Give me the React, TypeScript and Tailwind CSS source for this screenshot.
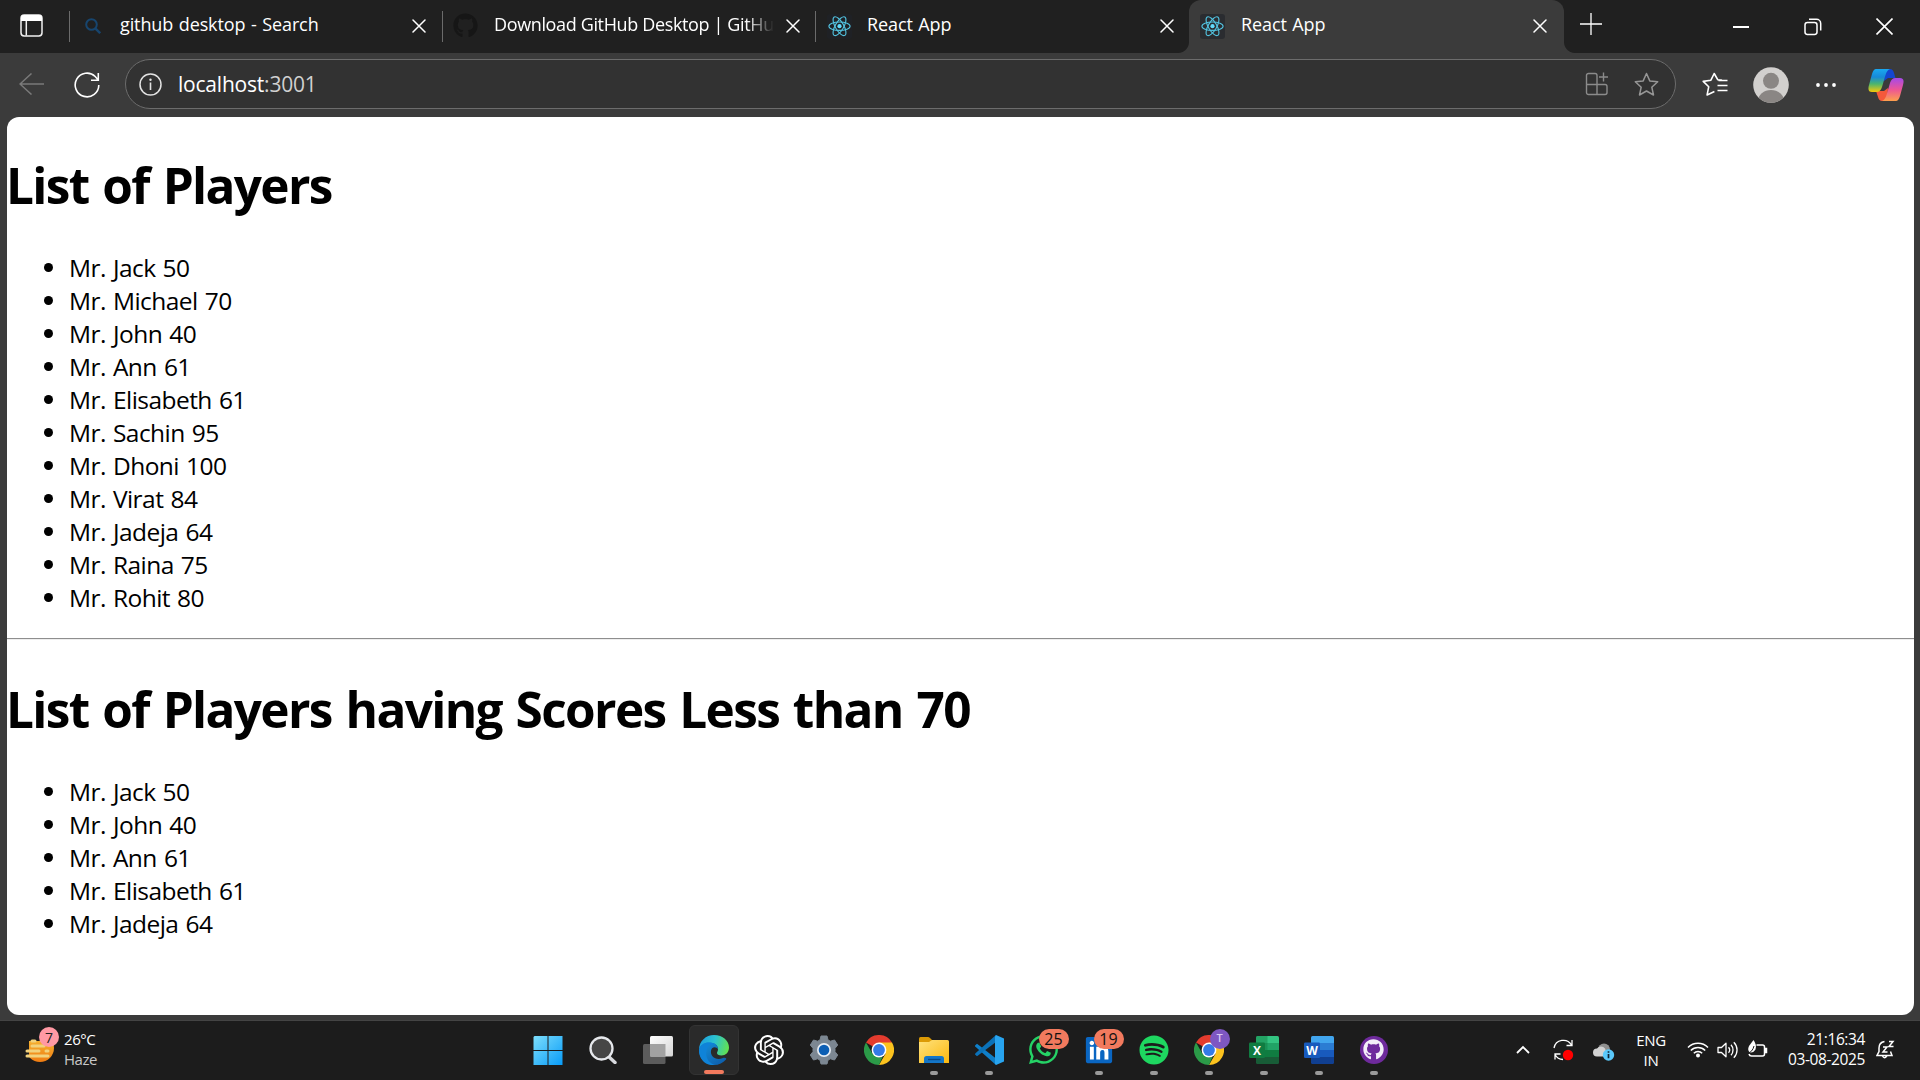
import React from "react";
import { FaGithub, FaWhatsapp, FaLinkedin, FaSpotify } from "react-icons/fa";
import { SiOpenai } from "react-icons/si";

const players = [
  { name: "Jack", score: 50 },
  { name: "Michael", score: 70 },
  { name: "John", score: 40 },
  { name: "Ann", score: 61 },
  { name: "Elisabeth", score: 61 },
  { name: "Sachin", score: 95 },
  { name: "Dhoni", score: 100 },
  { name: "Virat", score: 84 },
  { name: "Jadeja", score: 64 },
  { name: "Raina", score: 75 },
  { name: "Rohit", score: 80 },
];

function ReactLogo() {
  return (
    <svg width="25" height="25" viewBox="0 0 25 25" className="shrink-0 rounded-[3px] bg-[#20232a]/60">
      <g fill="none" stroke="#52c1de" strokeWidth="1.1">
        <ellipse cx="12.5" cy="12.2" rx="10.6" ry="4.2" />
        <ellipse cx="12.5" cy="12.2" rx="10.6" ry="4.2" transform="rotate(60 12.5 12.2)" />
        <ellipse cx="12.5" cy="12.2" rx="10.6" ry="4.2" transform="rotate(120 12.5 12.2)" />
      </g>
      <circle cx="12.5" cy="12.2" r="2.1" fill="#61dafb" />
    </svg>
  );
}

function TabClose() {
  return (
    <svg width="14" height="14" viewBox="0 0 14 14" className="mb-px shrink-0" stroke="#fff" strokeWidth="1.5" strokeLinecap="round">
      <path d="M1 1l12 12M13 1L1 13" />
    </svg>
  );
}

function Divider() {
  return <div className="h-[31px] w-px shrink-0 bg-[#6b6b6b]" />;
}

function TabStrip() {
  return (
    <header className="flex h-[53px] shrink-0 bg-[#202020] text-[18px] tracking-[-0.006em] [word-spacing:1px] text-white">
      <div className="flex w-[69px] items-center pl-5 pb-[2px]">
        <svg width="23" height="23" viewBox="0 0 23 23" fill="none">
          <rect x="1" y="1" width="21" height="21" rx="3.2" stroke="#f0f0f0" strokeWidth="1.5" />
          <path d="M1 7V4a3 3 0 0 1 3-3h15a3 3 0 0 1 3 3v3z" fill="#fff" />
          <path d="M6.3 7v14.5" stroke="#f0f0f0" strokeWidth="1.5" />
        </svg>
      </div>
      <div className="flex w-[373px] items-center">
        <Divider />
        <svg width="16" height="16" viewBox="0 0 16 16" className="mb-[2px] ml-[15px] shrink-0" fill="none" stroke="#17456e" strokeWidth="2">
          <circle cx="6.5" cy="6.5" r="5.3" />
          <path d="M10.3 10.3L15.2 15.2" strokeWidth="2.4" />
        </svg>
        <span className="ml-[19px] w-[292px] whitespace-nowrap pb-[5px]">github desktop - Search</span>
        <TabClose />
      </div>
      <div className="flex w-[373px] items-center">
        <Divider />
        <FaGithub size={25} color="#161616" className="mb-[2px] ml-[10px] shrink-0" />
        <span className="ml-[16px] mr-3 w-[280px] overflow-hidden whitespace-nowrap pb-[5px] tracking-[-0.020em] [mask-image:linear-gradient(90deg,#000_90%,transparent)] [word-spacing:0px]">
          Download GitHub Desktop | GitHub
        </span>
        <TabClose />
      </div>
      <div className="flex w-[374px] items-center bg-[#202020]">
        <Divider />
        <span className="mb-px ml-[11px] flex">
          <ReactLogo />
        </span>
        <span className="ml-[15px] w-[293px] pb-[5px]">React App</span>
        <TabClose />
      </div>
      <div className="relative flex w-[375px] bg-[#202020]">
        <span className="absolute bottom-0 right-full size-[11px] bg-[radial-gradient(circle_at_0_0,#202020_10.5px,#3b3b3b_11.5px)]" />
        <div className="flex w-full items-center rounded-t-[12px] bg-[#3b3b3b] pl-[11px]">
          <span className="mb-px flex">
            <ReactLogo />
          </span>
          <span className="ml-4 w-[292px] pb-[5px]">React App</span>
          <TabClose />
        </div>
      </div>
      <div className="relative flex flex-1 items-center bg-[#202020]">
        <span className="absolute bottom-0 left-0 size-[11px] bg-[radial-gradient(circle_at_100%_0,#202020_10.5px,#3b3b3b_11.5px)]" />
        <svg width="22" height="22" viewBox="0 0 22 22" className="mb-[5px] ml-4" stroke="#fff" strokeWidth="1.3">
          <path d="M11 0v22M0 11h22" />
        </svg>
        <svg width="16" height="16" viewBox="0 0 16 16" className="ml-[131px]" stroke="#fff" strokeWidth="2">
          <path d="M0 8h16" />
        </svg>
        <svg width="18" height="18" viewBox="0 0 18 18" className="ml-[55px]" fill="none" stroke="#fff" strokeWidth="1.5">
          <rect x="1" y="4.5" width="12" height="12" rx="2.4" />
          <path d="M5 1.3h7.5A4.2 4.2 0 0 1 16.7 5.5v7" />
        </svg>
        <svg width="17" height="17" viewBox="0 0 17 17" className="ml-[54px]" stroke="#fff" strokeWidth="1.6">
          <path d="M.5.5l16 16M16.5.5l-16 16" />
        </svg>
      </div>
    </header>
  );
}

const star = "M12.5 1.5l3.3 7.4 7.9.9-5.9 5.4 1.7 7.8-7-4-7 4 1.7-7.8L1.3 9.8l7.9-.9z";

function Toolbar() {
  return (
    <div className="flex h-[64px] shrink-0 items-start pt-[6px]">
      <div className="flex h-[50px] w-[125px] items-center pl-[19px]">
        <svg width="25" height="22" viewBox="0 0 25 22" className="mb-[1px]" fill="none" stroke="#7a7a7a" strokeWidth="1.5">
          <path d="M25 11H1M12.5.5L1 11l11.5 10.5" />
        </svg>
        <svg width="26" height="26" viewBox="0 0 26 26" className="ml-[30px] mt-[1px]" fill="none" stroke="#fff" strokeWidth="1.6">
          <path d="M24.8 13A11.8 11.8 0 1 1 21.2 4.5L23.8 7.5M24.3 1v7.200H17" />
        </svg>
      </div>
      <div className="flex h-[50px] w-[1551px] items-center rounded-full border border-[#6c6c6c] bg-[#323232] pl-[13px]">
        <svg width="23" height="23" viewBox="0 0 23 23" fill="none" stroke="#e2e2e2" strokeWidth="1.5">
          <circle cx="11.5" cy="11.5" r="10.5" />
          <path d="M11.5 9.5v7.5" strokeWidth="1.6" />
          <circle cx="11.5" cy="6.8" r="1.2" fill="#e2e2e2" stroke="none" />
        </svg>
        <span className="ml-[16px] flex-1 pt-px text-[21px] tracking-[-0.010em] text-white">
          localhost<span className="text-[#d0d0d0]">:3001</span>
        </span>
        <svg width="24" height="24" viewBox="0 0 24 24" fill="none" stroke="#8b8b8b" strokeWidth="1.4">
          <path d="M1.5 3.500a2 2 0 0 1 2-2H10a2 2 0 0 1 2 2v9h8a2 2 0 0 1 2 2V20.500a2 2 0 0 1-2 2H3.500a2 2 0 0 1-2-2zM1.500 12.500H12M12 12v10.500M18.500.5v9M14 5h9" />
        </svg>
        <svg width="25" height="25" viewBox="0 0 25 25" className="ml-[25px] mr-[16px]" fill="none" stroke="#969696" strokeWidth="1.5" strokeLinejoin="round">
          <path d={star} />
        </svg>
      </div>
      <div className="flex h-[50px] items-center">
        <svg width="26" height="25" viewBox="0 0 26 25" className="ml-[26px] mt-px" fill="none" stroke="#fff" strokeWidth="1.6" strokeLinejoin="round">
          <path d="M20 8.300l-4.300-.6-3.500-6.200-3.300 6.700-7.700 1.200 5.500 5.400-1.600 8.100 7.300-3.400" />
          <path d="M16.500 8.500h9M15.500 13.500h10M15.500 18.500h10" />
        </svg>
        <svg width="36" height="36" viewBox="0 0 36 36" className="ml-[25px] mt-px">
          <clipPath id="avatar">
            <circle cx="18" cy="18" r="17.8" />
          </clipPath>
          <g clipPath="url(#avatar)">
            <rect width="36" height="36" fill="#d2d0ce" />
            <circle cx="18" cy="13.8" r="8" fill="#8a8684" />
            <ellipse cx="18" cy="34" rx="13" ry="11" fill="#8a8684" />
          </g>
        </svg>
        <svg width="22" height="6" viewBox="0 0 22 6" className="ml-[26px] mt-px" fill="#fff">
          <circle cx="3" cy="3" r="1.9" />
          <circle cx="11" cy="3" r="1.9" />
          <circle cx="19" cy="3" r="1.9" />
        </svg>
        <svg width="36" height="34" viewBox="0 0 36 34" className="ml-[31px] mt-px">
          <defs>
            <linearGradient id="cpA" x1="0" y1="0" x2="0" y2="1">
              <stop offset="0" stopColor="#1aa8f0" />
              <stop offset=".35" stopColor="#1789d8" />
              <stop offset=".65" stopColor="#4cb56d" />
              <stop offset="1" stopColor="#f6c90a" />
            </linearGradient>
            <linearGradient id="cpB" x1="0" y1="0" x2="0" y2="1">
              <stop offset="0" stopColor="#a549ea" />
              <stop offset=".5" stopColor="#ec5596" />
              <stop offset="1" stopColor="#fda04c" />
            </linearGradient>
          </defs>
          <path d="M17 1h5q3 0 4 4l1.500 5H20l-4 3z" fill="#1446cf" />
          <path d="M19 33h-5q-3 0-4-4l-2-6h8l4-3z" fill="#f4593b" />
          <path d="M8 1h14q-3 1-4.500 6l-3.500 12q-1.500 5-5.500 5H4q-5 0-3-7L4 6Q5.500 1 8 1z" fill="url(#cpA)" />
          <path d="M28 33H14q3-1 4.500-6L22 15q1.500-5 5.500-5H32q5 0 3 7l-3 11q-1.500 5-4 5z" fill="url(#cpB)" />
        </svg>
      </div>
    </div>
  );
}

function PlayerList({ items }: { items: typeof players }) {
  return (
    <ul className="text-[24.5px] leading-[33px] tracking-[-0.022em] [word-spacing:1.2px]">
      {items.map((p) => (
        <li key={p.name} className="flex h-[33px] items-center pl-[37px]">
          <span className="mr-[16px] size-[9px] rounded-full bg-black" />
          Mr. {p.name} {p.score}
        </li>
      ))}
    </ul>
  );
}

function Heading({ children }: { children: React.ReactNode }) {
  return (
    <h1 className="-ml-px mb-[32px] mt-[35px] whitespace-nowrap text-[49.5px] font-bold leading-[67px] tracking-[-0.033em] [word-spacing:2.5px]">
      {children}
    </h1>
  );
}

function ChromeIcon() {
  return (
    <svg width="30" height="30" viewBox="0 0 30 30">
      <path d="M15 15L2 7.500A15 15 0 0 1 28 7.500z" fill="#e33b2e" />
      <path d="M15 7.500h13A15 15 0 0 1 15 30l6.500-11.250z" fill="#fcc31e" />
      <path d="M2 7.500l6.500 11.250L15 22.500l3.500-.5L15 30A15 15 0 0 1 2 7.500z" fill="#2b9a48" />
      <circle cx="15" cy="15" r="7.4" fill="#fff" />
      <circle cx="15" cy="15" r="5.9" fill="#357be8" />
    </svg>
  );
}

function OfficeIcon({ letter, bands, tile }: { letter: string; bands: string[]; tile: string }) {
  return (
    <svg width="30" height="28" viewBox="0 0 30 28">
      <clipPath id={"sheet" + letter}>
        <rect x="7" y="0" width="23" height="28" rx="1.5" />
      </clipPath>
      <g clipPath={`url(#sheet${letter})`}>
        {bands.map((c, i) => (
          <rect key={c} x="7" y={i * 7} width="23" height="7" fill={c} />
        ))}
        {letter === "X" && <path d="M7 0h11.500v21H7z" fill="#107c41" opacity=".45" />}
      </g>
      <rect x="0" y="6.5" width="16" height="15.5" rx="1.3" fill={tile} />
      <text x="8" y="18.600" textAnchor="middle" fontSize="12" fontWeight="700" fill="#fff">
        {letter}
      </text>
    </svg>
  );
}

function Cell({ children, running, active }: { children: React.ReactNode; running?: boolean; active?: boolean }) {
  return (
    <div className="flex h-[57px] w-[55px] items-center justify-center">
      <div
        className={
          active
            ? "relative flex h-[50px] w-[50px] items-center justify-center rounded-md border border-[#333] bg-[#2a2a2a]"
            : "relative flex h-[50px] w-[50px] items-center justify-center"
        }
      >
        {children}
        {active && <span className="absolute bottom-0 h-1 w-5 rounded-full bg-[#f27a5e]" />}
        {running && <span className="absolute bottom-0 h-1 w-2 rounded-full bg-[#9a9a9a]" />}
      </div>
    </div>
  );
}

function CountBadge({ children }: { children: React.ReactNode }) {
  return (
    <span className="absolute top-[4px] left-[20px] flex h-5 w-[30px] items-center justify-center rounded-full bg-[#f27a5e] text-[16px] text-[#111]">
      {children}
    </span>
  );
}

function Taskbar() {
  return (
    <footer className="flex h-[60px] shrink-0 border-t border-[#444] bg-[#1c1c1c]">
      <div className="flex w-[520px] pl-[24px]">
        <div className="relative mt-[6px] h-[46px] w-[36px]">
          <svg width="32" height="46" viewBox="0 0 32 46">
            <defs>
              <linearGradient id="sun" x1="0" y1="0" x2="0" y2="1">
                <stop offset="0" stopColor="#f7c23a" />
                <stop offset="1" stopColor="#ef7c12" />
              </linearGradient>
            </defs>
            <circle cx="16" cy="21" r="14" fill="url(#sun)" />
            <path d="M0 6h30v8H5v14H0z" fill="#1c1c1c" />
            <g stroke="#f2d27c" strokeWidth="3" strokeLinecap="round">
              <path d="M8 14h3M8 19h12M3 24h12M22 24h2M3 29h21" />
            </g>
          </svg>
          <span className="absolute left-[15px] top-0 flex size-5 items-center justify-center rounded-full bg-[#ff99a4] text-[14px] text-[#222]">7</span>
        </div>
        <div className="ml-[4px] mt-[8px] text-[15px] leading-5 tracking-[-0.030em] text-white">
          <div>26°C</div>
          <div className="text-[#c8c8c8]">Haze</div>
        </div>
      </div>
      <nav className="flex w-[1001px] pl-px">
        <Cell>
          <svg width="30" height="30" viewBox="0 0 30 30" className="mr-[2px]">
            <defs>
              <linearGradient id="win" x1="0" y1="0" x2="30" y2="30" gradientUnits="userSpaceOnUse">
                <stop offset="0" stopColor="#80e0fc" />
                <stop offset="1" stopColor="#079bf8" />
              </linearGradient>
            </defs>
            <path d="M1.500 1H14.500v14H.5V2zM15.500 1h14v14h-14zM.5 16h14v14H.5zM15.500 16h14v14h-14z" fill="url(#win)" />
          </svg>
        </Cell>
        <Cell>
          <svg width="28" height="28" viewBox="0 0 28 28" className="mr-px">
            <path d="M19 20l7 6.500" stroke="#d8dade" strokeWidth="3.4" strokeLinecap="round" />
            <circle cx="12.5" cy="12.5" r="11" fill="#464646" stroke="#e6e8ec" strokeWidth="2.3" />
          </svg>
        </Cell>
        <Cell>
          <svg width="30" height="28" viewBox="0 0 30 28" className="mr-[2px]">
            <defs>
              <linearGradient id="tv" x1="0" y1="0" x2="1" y2="1">
                <stop offset="0" stopColor="#fff" />
                <stop offset="1" stopColor="#d5d5d5" />
              </linearGradient>
            </defs>
            <rect x="0" y="8" width="22.5" height="20" rx="1.5" fill="#5c5c5c" />
            <rect x="7" y="0" width="23" height="20.5" rx="1.5" fill="url(#tv)" />
            <path d="M7 8h15.500v12.500H7z" fill="#a2a2a2" />
          </svg>
        </Cell>
        <Cell active>
          <svg width="30" height="30" viewBox="0 0 30 30">
            <defs>
              <linearGradient id="edA" x1="0" y1=".3" x2="1" y2=".5">
                <stop offset="0" stopColor="#1c9de0" />
                <stop offset=".5" stopColor="#2cc3cf" />
                <stop offset="1" stopColor="#62e052" />
              </linearGradient>
              <linearGradient id="edB" x1="0" y1="0" x2="1" y2="1">
                <stop offset="0" stopColor="#1593dc" />
                <stop offset="1" stopColor="#0c59a8" />
              </linearGradient>
            </defs>
            <path d="M0 15C0 6 7 0 15 0c9 0 15 6 15 12.500 0 5-3.500 8-7.500 8-3 0-4.500-1-4.500-2.500 0-1 1-1.500 1-4 0-4-4-6-8-6C5 8 1 11 0 15z" fill="url(#edA)" />
            <path d="M0 15c1-5 5-7.500 10-7.500 5 0 9 2.500 9 6.500-1-2-6-3.500-7 1.500-1 6 5 10.500 12 7.500 2-.8 4 .2 3 1.500C24 28 20 30 15 30 6 30 0 23 0 15z" fill="url(#edB)" />
            <path d="M9 12c-4 7-1 16 7 18-10 1-16-6-16-15 1-5 5-7.500 10-7.500 3.500 0 6.500 1 8 3-3-1.500-7-1.500-9 1.500z" fill="#0f83d8" />
          </svg>
        </Cell>
        <Cell>
          <SiOpenai size={30} color="#fff" />
        </Cell>
        <Cell>
          <svg width="30" height="30" viewBox="0 0 30 30">
            <path
              d="M12 1h6l1 4 2.500 1.200L25.500 5l3.200 5-2.700 3.300v3.400l2.700 3.300-3.200 5-4-1.200L19 25l-1 4h-6l-1-4-2.500-1.200-4 1.200-3.200-5L4 16.700v-3.400L1.300 10l3.200-5 4 1.200L11 5z"
              fill="#7c8792"
              stroke="#7c8792"
              strokeLinejoin="round"
            />
            <circle cx="15" cy="15" r="7" fill="#e8eef4" />
            <circle cx="15" cy="15" r="5.3" fill="#0c5fb4" />
          </svg>
        </Cell>
        <Cell>
          <ChromeIcon />
        </Cell>
        <Cell running>
          <svg width="30" height="28" viewBox="0 0 30 28">
            <defs>
              <linearGradient id="folder" x1="0" y1="0" x2="1" y2="1">
                <stop offset="0" stopColor="#ffe27d" />
                <stop offset="1" stopColor="#fbb80f" />
              </linearGradient>
            </defs>
            <path d="M0 2.500Q0 1 1.500 1H9q1 0 2 1l2.500 2.500V9H0z" fill="#dc9a05" />
            <path d="M0 6h10l3-2h15.500Q30 4 30 5.500V27H0z" fill="url(#folder)" />
            <path d="M5 27v-4.500Q5 20 7.500 20h15q2.500 0 2.500 2.500V27z" fill="#1476c8" />
            <path d="M9 23.500h12.500" stroke="#0a4a86" strokeWidth="1.4" />
          </svg>
        </Cell>
        <Cell running>
          <svg width="30" height="30" viewBox="0 0 30 30">
            <path d="M1 10.500l2-1.700 21 16.200-2 5L1.200 11.500z" fill="#0f7fc9" />
            <path d="M1 19.500l2 1.800L24 5.500 22 0 1.200 18.500z" fill="#0b72b9" />
            <path d="M22 0l8 3.500v23L22 30l-1-1.500v-27z" fill="#28a4ef" />
          </svg>
        </Cell>
        <Cell>
          <FaWhatsapp size={33} color="#25d366" />
          <CountBadge>25</CountBadge>
        </Cell>
        <Cell running>
          <FaLinkedin size={30} color="#0a66c2" className="rounded bg-[linear-gradient(#fff,#fff)] bg-[length:22px_20px] bg-center bg-no-repeat" />
          <CountBadge>19</CountBadge>
        </Cell>
        <Cell running>
          <FaSpotify size={30} color="#1ed760" />
        </Cell>
        <Cell running>
          <ChromeIcon />
          <span className="absolute top-[4px] left-[26px] flex size-5 items-center justify-center rounded-full bg-[#7e57c2] text-[11px] font-semibold text-[#d9c9f2]">
            T
          </span>
        </Cell>
        <Cell running>
          <OfficeIcon letter="X" bands={["#33c481", "#21a366", "#107c41", "#185c37"]} tile="#107c41" />
        </Cell>
        <Cell running>
          <OfficeIcon letter="W" bands={["#41a5ee", "#2b7cd3", "#185abd", "#103f91"]} tile="#185abd" />
        </Cell>
        <Cell running>
          <span className="flex size-7 items-center justify-center rounded-full bg-[#6e2a9c]">
            <FaGithub size={21} color="#f3eef8" />
          </span>
        </Cell>
      </nav>
      <div className="flex flex-1 items-start text-white">
        <svg width="14" height="9" viewBox="0 0 14 9" className="-ml-[5px] mt-[24px]" fill="none" stroke="#fff" strokeWidth="1.8">
          <path d="M1 8l6-6 6 6" />
        </svg>
        <svg width="21" height="22" viewBox="0 0 21 22" className="ml-[23px] mt-[18px]" fill="none" stroke="#fff" strokeWidth="1.3">
          <path d="M1 9A9.500 9.500 0 0 1 18.500 6M19 1v5.500h-5.500M2 20.500V15h5.500M2 15.500a9.500 9.500 0 0 0 8 5" />
          <circle cx="15" cy="16" r="5.2" fill="#f00" stroke="none" />
        </svg>
        <svg width="22" height="18" viewBox="0 0 22 18" className="ml-[19px] mt-[22px]">
          <circle cx="11" cy="6.5" r="6" fill="#8f8f8f" />
          <path d="M4 13.500a4 4 0 0 1 0-8 5 5 0 0 1 8 0l3 8z" fill="#d2d2d2" />
          <circle cx="15.5" cy="12" r="5.700" fill="#5ac8fa" />
          <path d="M15.500 11v4.300M15.500 8.300v1.500" stroke="#123" strokeWidth="1.7" />
        </svg>
        <div className="ml-[16px] mt-[9px] w-[40px] text-center text-[15px] leading-5 tracking-[-0.020em]">
          <div>ENG</div>
          <div>IN</div>
        </div>
        <svg width="22" height="17" viewBox="0 0 22 17" className="ml-[16px] mt-[20px]" fill="none" stroke="#fff" strokeWidth="1.5">
          <path d="M1 6.500a14 14 0 0 1 20 0M3.800 9.500a10 10 0 0 1 14.400 0M6.800 12.300a6 6 0 0 1 8.400 0" />
          <circle cx="11" cy="14.5" r="2" fill="#fff" stroke="none" />
        </svg>
        <svg width="21" height="18" viewBox="0 0 21 18" className="ml-[8px] mt-[20px]" fill="none" stroke="#fff" strokeWidth="1.3" strokeLinejoin="round">
          <path d="M1 6.500h3.500L9 2.200v13.600L4.500 11.500H1zM11.500 6.300a4 4 0 0 1 0 5.400M14 3.700a8 8 0 0 1 0 10.600M16.800 1.200a11 11 0 0 1 0 15.600" />
        </svg>
        <svg width="21" height="18" viewBox="0 0 21 18" className="ml-[9px] mt-[19px]" fill="none" stroke="#fff" strokeWidth="1.5">
          <path d="M9.500 5h6q2 0 2 2v7q0 2-2 2h-11q-2 0-2.500-2" />
          <path d="M18 8.500h1.500v4H18z" fill="#fff" />
          <path d="M6.500 0Q10 5 8.500 9.500 6.500 13 3 12.500 0 10 2 6z" fill="#fff" stroke="none" />
          <path d="M7 6q-1.500 6-6.500 7.500" stroke="#1c1c1c" strokeWidth="1" />
        </svg>
        <div className="ml-[9px] mt-[8px] w-[88px] whitespace-nowrap text-right text-[15.5px] leading-5 tracking-[-0.025em]">
          <div>21:16:34</div>
          <div>03-08-2025</div>
        </div>
        <svg width="19" height="20" viewBox="0 0 19 20" className="ml-[11px] mt-[19px]" fill="none" stroke="#fff" strokeWidth="1.5">
          <path d="M8.500 1.500Q3 2.500 3 8v3.500L1 15.500h15l-1.500-4M6.500 16q1.800 3.500 4.300 0" />
          <path d="M7 7h4l-4 5h4.500M13 1.500h4L13 6.500h4.500" />
        </svg>
      </div>
    </footer>
  );
}

export default function App() {
  return (
    <div className="flex h-[1080px] w-[1920px] flex-col overflow-hidden bg-[#3b3b3b] font-['Open_Sans','Noto_Sans',sans-serif]">
      <TabStrip />
      <Toolbar />
      <main className="mb-[5px] ml-[7px] mr-[6px] flex flex-1 flex-col overflow-hidden rounded-[12px] bg-white text-black">
        <Heading>List of Players</Heading>
        <PlayerList items={players} />
        <hr className="mb-px mt-6 h-[2px] border-b border-t-[#8e8e8e] border-b-[#eeeeee]" />
        <Heading>List of Players having Scores Less than 70</Heading>
        <PlayerList items={players.filter((p) => p.score < 70)} />
      </main>
      <Taskbar />
    </div>
  );
}
